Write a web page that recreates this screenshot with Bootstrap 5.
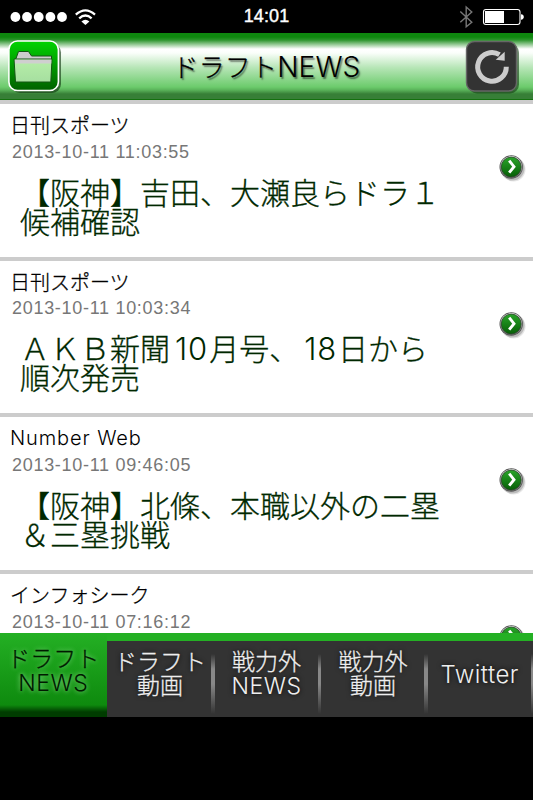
<!DOCTYPE html>
<html lang="ja">
<head>
<meta charset="utf-8">
<meta name="viewport" content="width=device-width, initial-scale=1">
<title>ドラフトNEWS</title>
<link href="https://cdn.jsdelivr.net/npm/bootstrap@5.3.0/dist/css/bootstrap.min.css" rel="stylesheet">
<style>
body{font-family:"Liberation Sans","Noto Sans CJK JP",sans-serif;height:800px;background:#000;overflow:hidden}
.jp{font-family:"Noto Sans CJK JP",sans-serif;font-weight:300;-webkit-text-stroke:.3px currentColor}
.status{height:33px;color:#fff}
.status-side{width:200px}
.clock{font-size:18px;line-height:33px;-webkit-text-stroke:.4px #fff;letter-spacing:.1px}
.topbar{height:67px;padding:0 14px 0 8px;border-bottom:1px solid #14700f;background:linear-gradient(#0e870e 0,#0e870e 4px,#2d952d 7px,#fff 16px,#fafefa 20px,#b5e5b5 35px,#6ccb6c 54px,#5ab35a 57px,#377f37 61px,#377f37 66px)}
.bar-title{font-size:26px;line-height:66px;margin-left:6px;letter-spacing:.15px;color:#000;text-shadow:1.5px 2px 1.5px rgba(0,0,0,.5);white-space:nowrap}
.bar-title .num{font-size:28px}
.news{height:533px}
.news-row{height:156.7px;border-top:4px solid #ccc;padding:0 6.5px 0 10px;background:#fff;flex:none}
.source{font-size:20px;line-height:24px;margin-top:9px;color:#000;white-space:nowrap}
.stamp{font-size:18px;line-height:22px;margin-top:3.5px;margin-left:2px;color:#777;letter-spacing:.7px;white-space:nowrap}
.headline{font-size:30px;line-height:29px;margin:14px 0 0 10px;color:#002800;white-space:nowrap}
.num{font-family:"Inter","Liberation Sans",sans-serif;font-weight:300;-webkit-text-stroke:0;line-height:1}
.headline .num{font-size:31px;letter-spacing:.9px;line-height:20px;padding:0 1px 0 5px}
.source .num{letter-spacing:.9px}
.tabs{height:84px;border-top:8px solid #24b024;background:#333}
.tab-item{flex:1 1 0;color:#eee;font-size:23px;line-height:24px;text-align:center;white-space:nowrap;text-shadow:0 0 5px #000;padding-top:7px;position:relative}
.tab-item .num{letter-spacing:.5px}
.tab-item:not(.current)::after{content:"";position:absolute;right:-1.5px;top:13px;width:3.5px;height:60px;background:linear-gradient(rgba(130,130,130,0),#888 25%,#888 50%,rgba(130,130,130,0))}
.tab-item.current{color:#001a00;background:linear-gradient(#24b024,#0e8a0e 72px,#003c00 79px,#003c00);margin-top:-8px;height:84px;padding-top:12px;text-shadow:0 0 5px rgba(210,255,210,.7);flex-basis:0}
.tab-item.single{padding-top:20px}
.single .num{font-size:24px}
</style>
<script src="https://cdn.jsdelivr.net/npm/bootstrap@5.3.0/dist/js/bootstrap.bundle.min.js"></script>
</head>
<body class="d-flex flex-column">
<svg width="0" height="0" class="position-absolute">
  <defs>
    <linearGradient id="gFolder" x2="0" y2="1"><stop offset="0" stop-color="#00d400"/><stop offset="1" stop-color="#006000"/></linearGradient>
    <linearGradient id="gPaper" x2="0" y2="1"><stop offset="0" stop-color="#b7efa8"/><stop offset="1" stop-color="#a6dfa0"/></linearGradient>
    <linearGradient id="gGo" x2="0" y2="1"><stop offset="0" stop-color="#2aa52a"/><stop offset="1" stop-color="#075f07"/></linearGradient>
    <linearGradient id="gRim" x2="0" y2="1"><stop offset="0" stop-color="#ddd"/><stop offset="1" stop-color="#666"/></linearGradient>
  </defs>
</svg>
<div class="status d-flex justify-content-between align-items-center flex-shrink-0">
  <svg class="status-side" height="33" viewBox="0 0 200 33">
    <g fill="#fff"><circle cx="15.4" cy="17" r="4.9"/><circle cx="27" cy="17" r="4.9"/><circle cx="38.7" cy="17" r="4.9"/><circle cx="50.4" cy="17" r="4.9"/><circle cx="62" cy="17" r="4.9"/>
    <path d="M81.4 21.5Q85.4 17.8 89.4 21.5L85.4 25z"/></g>
    <g fill="none" stroke="#fff" stroke-width="2.3"><path d="M75.8 14.6Q85.4 6.2 95 14.6"/><path d="M79.2 18.3Q85.4 12.6 91.6 18.3"/></g>
  </svg>
  <span class="clock">14:01</span>
  <svg class="status-side" height="33" viewBox="333 0 200 33">
    <path d="M460.3 11.6L471.8 22.3 466.2 26.8V7L471.8 11.9 460.3 22.3" fill="none" stroke="#777" stroke-width="1.4"/>
    <rect x="483.5" y="9.5" width="36.5" height="15" rx="2.5" fill="none" stroke="#fff" stroke-width="1.1"/>
    <rect x="485" y="11" width="19" height="12" fill="#fff"/><path d="M521 14.3q2.8.3 2.8 2.7t-2.8 2.7z" fill="#fff"/>
  </svg>
</div>
<header class="topbar d-flex justify-content-between align-items-center flex-shrink-0">
  <svg width="56" height="58" viewBox="8 37.5 56 58">
    <rect x="11" y="44" width="50" height="49.5" rx="9" fill="#163c16" opacity=".65"/>
    <rect x="8.9" y="41.5" width="49.5" height="49.5" rx="8.5" fill="url(#gFolder)" stroke="#fff" stroke-width="1.6"/>
    <path d="M16 62V59L18.5 52H28.5L31.5 56.5H51.5V62z" fill="#ccc" stroke="#145514" stroke-width="1"/>
    <path d="M14 59.5H52L50.8 82.5H15.5z" fill="url(#gPaper)" stroke="#145514" stroke-width="1"/>
    <path d="M15 60.2H51.3V64H15z" fill="#cfcfcf"/>
  </svg>
  <div class="bar-title jp">ドラフト<span class="num">NEWS</span></div>
  <svg width="56" height="58" viewBox="463 37.5 56 58">
    <rect x="468" y="44" width="51" height="50" rx="9" fill="#163c16" opacity=".6"/>
    <rect x="466.5" y="42" width="50" height="49.5" rx="8" fill="#333" stroke="#666" stroke-width="1.4"/>
    <path d="M499.5 55.2A14.3 14.3 0 1 0 506.3 67.2" fill="none" stroke="#ccc" stroke-width="5"/>
    <path d="M504.7 52.2V61.2L495.7 60.2z" fill="#ccc"/>
  </svg>
</header>
<main class="news d-flex flex-column overflow-hidden flex-shrink-0">
  <article class="news-row d-flex justify-content-between">
    <div><div class="source jp">日刊スポーツ</div><div class="stamp">2013-10-11 11:03:55</div>
    <div class="headline jp">【阪神】吉田、大瀬良らドラ１<br>候補確認</div></div>
    <svg class="flex-shrink-0" width="30" height="130" viewBox="497 104 30 130"><use href="#go"/></svg>
  </article>
  <article class="news-row d-flex justify-content-between">
    <div><div class="source jp">日刊スポーツ</div><div class="stamp">2013-10-11 10:03:34</div>
    <div class="headline jp">ＡＫＢ新聞<span class="num">10</span>月号、<span class="num">18</span>日から<br>順次発売</div></div>
    <svg class="flex-shrink-0" width="30" height="130" viewBox="497 104 30 130"><use href="#go"/></svg>
  </article>
  <article class="news-row d-flex justify-content-between">
    <div><div class="source"><span class="num">Number Web</span></div><div class="stamp">2013-10-11 09:46:05</div>
    <div class="headline jp">【阪神】北條、本職以外の二塁<br>＆三塁挑戦</div></div>
    <svg class="flex-shrink-0" width="30" height="130" viewBox="497 104 30 130"><use href="#go"/></svg>
  </article>
  <article class="news-row d-flex justify-content-between">
    <div><div class="source jp">インフォシーク</div><div class="stamp">2013-10-11 07:16:12</div></div>
    <svg class="flex-shrink-0" width="30" height="130" viewBox="497 104 30 130">
      <g id="go"><circle cx="513.5" cy="169.5" r="12" fill="#000" opacity=".1"/><circle cx="512.5" cy="168.5" r="12" fill="#000" opacity=".18"/>
      <circle cx="511.2" cy="167" r="11.7" fill="#555"/><circle cx="511.2" cy="167" r="10.9" fill="url(#gRim)"/><circle cx="511.2" cy="167" r="9.9" fill="url(#gGo)" stroke="#244924" stroke-width=".8"/>
      <path d="M509.2 160.7L514 166.7 509.2 172.6" fill="none" stroke="#fff" stroke-width="2.9"/></g>
    </svg>
  </article>
</main>
<nav class="tabs d-flex flex-shrink-0">
  <div class="tab-item current jp">ドラフト<br><span class="num">NEWS</span></div>
  <div class="tab-item jp">ドラフト<br>動画</div>
  <div class="tab-item jp">戦力外<br><span class="num">NEWS</span></div>
  <div class="tab-item jp">戦力外<br>動画</div>
  <div class="tab-item jp single"><span class="num">Twitter</span></div>
</nav>
</body>
</html>
